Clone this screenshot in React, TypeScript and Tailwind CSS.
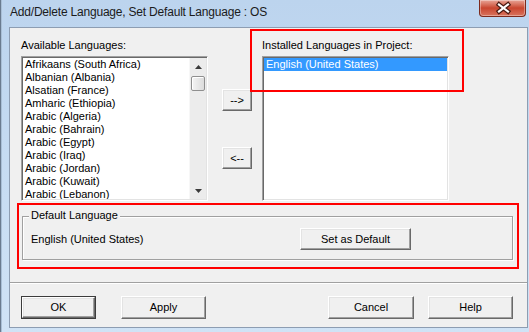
const available = [
  'Afrikaans (South Africa)',
  'Albanian (Albania)',
  'Alsatian (France)',
  'Amharic (Ethiopia)',
  'Arabic (Algeria)',
  'Arabic (Bahrain)',
  'Arabic (Egypt)',
  'Arabic (Iraq)',
  'Arabic (Jordan)',
  'Arabic (Kuwait)',
  'Arabic (Lebanon)',
];

function Button({ label, className = '' }: { label: string; className?: string }) {
  return (
    <div
      className={`flex items-center justify-center bg-[#f0f0f0] border border-t-white border-l-white border-r-[#696969] border-b-[#696969] shadow-[inset_-1px_-1px_0_#a0a0a0,inset_1px_1px_0_#e3e3e3] ${className}`}
    >
      {label}
    </div>
  );
}

function CloseIcon() {
  return (
    <svg width="47" height="17" viewBox="0 0 47 17">
      <path d="M19 4.5l9 7M28 4.5l-9 7" stroke="#4a1a12" strokeWidth={4.5} strokeLinecap="square" />
      <path d="M19 4.5l9 7M28 4.5l-9 7" stroke="#ffffff" strokeWidth={2.2} strokeLinecap="square" />
    </svg>
  );
}

export default function App() {
  return (
    <div className="relative w-[529px] h-[332px] overflow-hidden bg-gradient-to-b from-[#bcd4ee] to-[#d0e3f6] shadow-[inset_1px_0_0_#6a7b8f,inset_2px_0_0_#a9bfd6] text-black font-[family-name:'Liberation_Sans',Arial,sans-serif]">
      {/* Title bar */}
      <div className="flex h-[27px] pl-[10px]">
        <span className="mt-[4px] text-[12px] leading-[16px] tracking-[-0.2px] text-[#1b1b1b]">
          Add/Delete Language, Set Default Language : OS
        </span>
        <div className="ml-auto mr-[3px] w-[47px] h-[17px] rounded-b-[4px] border border-t-0 border-[#7d2a1c] bg-gradient-to-b from-[#e7a597] via-[#c9452e] to-[#d8735d] shadow-[inset_0_0_0_1px_rgba(255,255,255,0.35)]">
          <CloseIcon />
        </div>
      </div>

      {/* Client area */}
      <div className="ml-[9px] w-[519px] h-[301px] border border-[#8d9db2] bg-[#f0f0f0] text-[11px] leading-[13px]">
        <div className="flex items-start pt-[11px] pl-[11px]">
          {/* Available list */}
          <div className="flex flex-col">
            <span className="h-[13px]">Available Languages:</span>
            <div className="mt-[4px] flex w-[187px] h-[145px] bg-white border border-t-[#a0a0a0] border-l-[#a0a0a0] border-b-white border-r-white shadow-[inset_1px_1px_0_#696969,inset_-1px_-1px_0_#e3e3e3] p-[1px]">
              <div className="flex-1 overflow-hidden pl-[2px]">
                {available.map((l) => (
                  <div key={l} className="h-[13px] whitespace-nowrap">
                    {l}
                  </div>
                ))}
              </div>
              <div className="flex flex-col w-[17px] bg-[#ececec] border-l border-[#f7f7f7]">
                <div className="flex h-[17px] items-center justify-center">
                  <svg width="7" height="4" viewBox="0 0 7 4">
                    <path d="M3.5 0L7 4H0z" fill="#3a3a3a" />
                  </svg>
                </div>
                <div className="mt-[1px] mx-[1px] h-[15px] rounded-[2px] border border-[#8f8f8f] bg-gradient-to-r from-[#f4f4f4] to-[#dcdcdc] shadow-[inset_1px_1px_0_#ffffff]" />
                <div className="mt-auto flex h-[17px] items-center justify-center">
                  <svg width="7" height="4" viewBox="0 0 7 4">
                    <path d="M0 0H7L3.5 4z" fill="#3a3a3a" />
                  </svg>
                </div>
              </div>
            </div>
          </div>

          {/* Move buttons */}
          <div className="ml-[14px] mt-[50px] flex flex-col">
            <Button label="-->" className="w-[30px] h-[22px]" />
            <Button label="<--" className="mt-[36px] w-[30px] h-[22px]" />
          </div>

          {/* Installed list */}
          <div className="ml-[10px] flex flex-col">
            <span className="h-[13px]">Installed Languages in Project:</span>
            <div className="mt-[4px] w-[187px] h-[145px] bg-white border border-t-[#a0a0a0] border-l-[#a0a0a0] border-b-white border-r-white shadow-[inset_1px_1px_0_#696969,inset_-1px_-1px_0_#e3e3e3] p-[1px]">
              <div className="h-[13px] bg-[#3399ff] pl-[2px] text-white whitespace-nowrap">
                English (United States)
              </div>
            </div>
          </div>
        </div>

        {/* Default language (highlighted) */}
        <div className="ml-[7px] mt-[2px] w-[502px] h-[66px] border-2 border-[#ff0000] pt-[11px] pl-[3px]">
          <div className="flex flex-col w-[491px] h-[44px] border border-[#a0a0a0] shadow-[inset_1px_1px_0_#ffffff,1px_1px_0_#ffffff]">
            <span className="-mt-[8px] ml-[6px] w-fit px-[2px] bg-[#f0f0f0]">Default Language</span>
            <div className="mt-[6px] flex items-center">
              <span className="w-[277px] pl-[8px]">English (United States)</span>
              <Button label="Set as Default" className="w-[111px] h-[22px]" />
            </div>
          </div>
        </div>

        {/* Separator */}
        <div className="mt-[13px] h-[2px] border-t border-[#a0a0a0] bg-white" />

        {/* Dialog buttons */}
        <div className="mt-[12px] flex pl-[11px]">
          <div className="w-[75px] h-[23px] border border-[#3c3c3c]">
            <Button label="OK" className="w-full h-full" />
          </div>
          <Button label="Apply" className="ml-[25px] w-[85px] h-[23px]" />
          <Button label="Cancel" className="ml-[122px] w-[86px] h-[23px]" />
          <Button label="Help" className="ml-[14px] w-[85px] h-[23px]" />
        </div>
      </div>

      {/* Annotation box over the installed list */}
      <div className="absolute left-[250px] top-[29px] w-[214px] h-[63px] border-2 border-[#ff0000]" />
    </div>
  );
}
